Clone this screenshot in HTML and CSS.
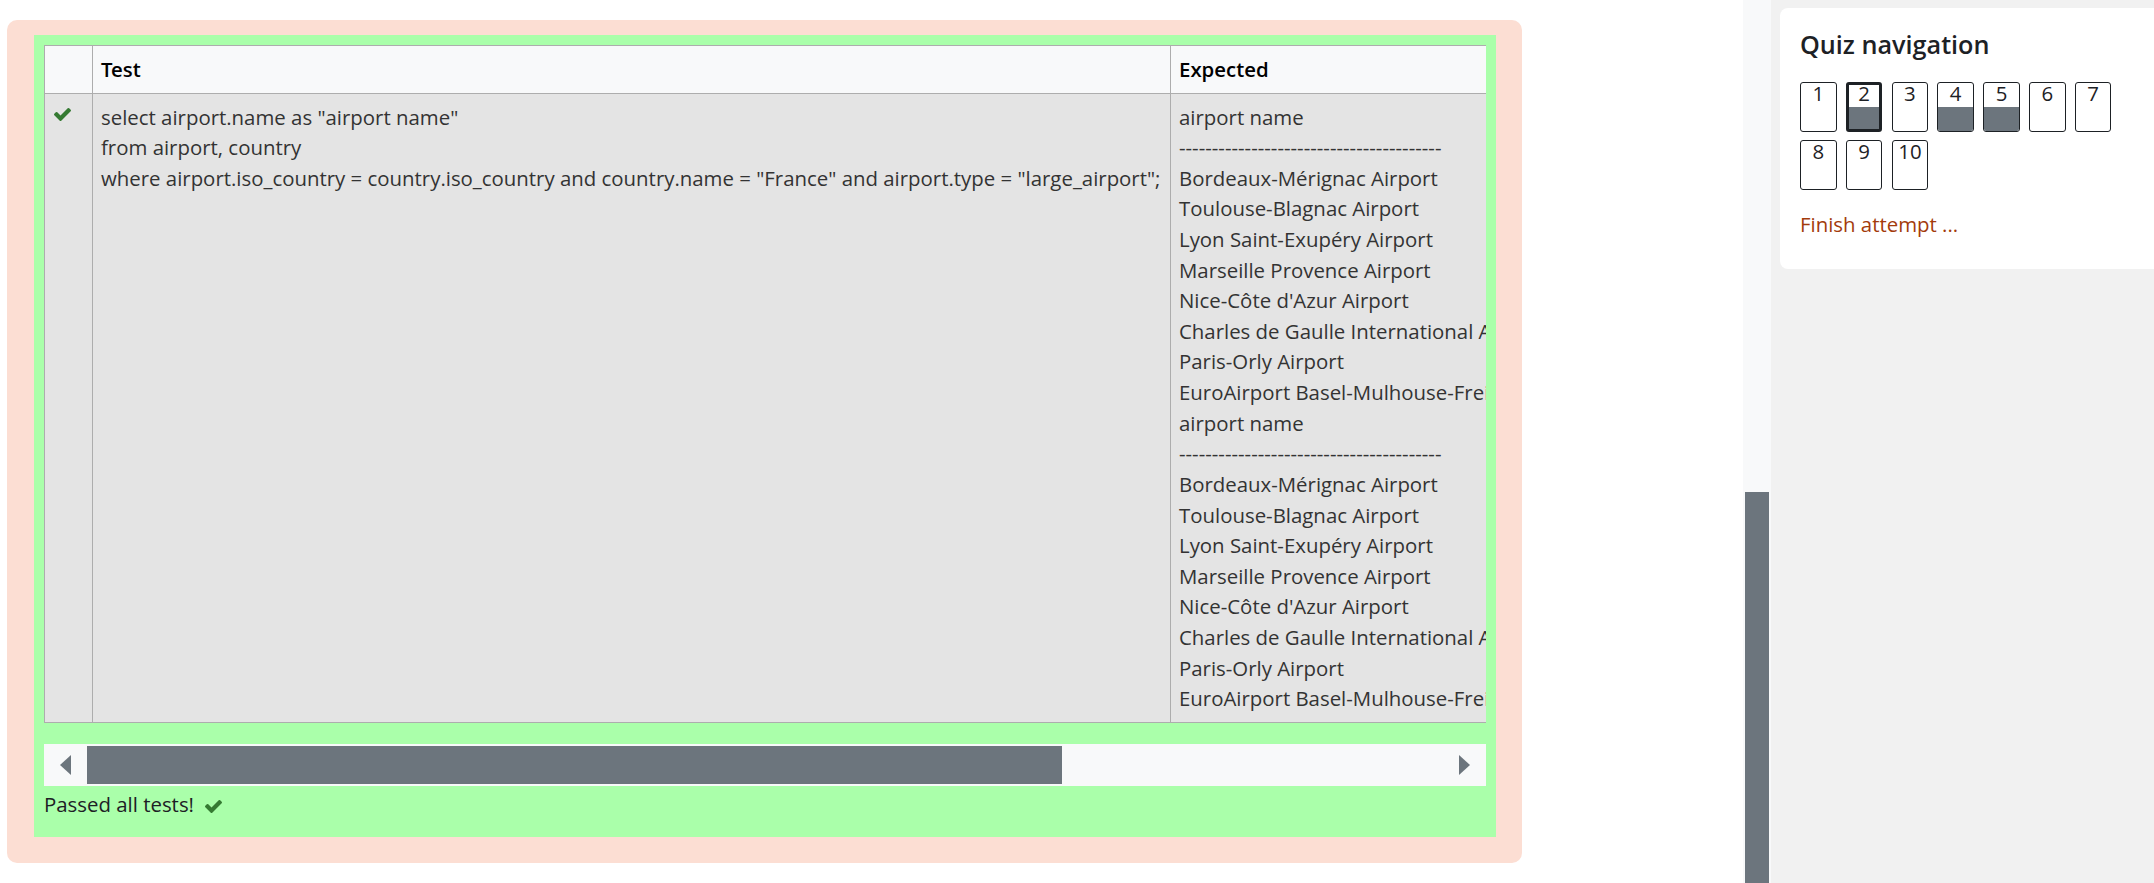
FILE: index.html
```html
<!DOCTYPE html>
<html lang="en">
<head>
<meta charset="utf-8">
<title>Quiz</title>
<link rel="stylesheet" href="styles.css">
</head>
<body>
<div class="page">
  <main class="main">
    <div class="outcome">
      <div class="feedback">
        <div class="table-wrap">
          <table class="results">
            <colgroup>
              <col class="c-icon"><col class="c-test"><col class="c-exp">
            </colgroup>
            <thead>
              <tr><th></th><th>Test</th><th>Expected</th></tr>
            </thead>
            <tbody>
              <tr>
                <td class="icon-cell"><svg class="check" viewBox="121 334 1550 1188" aria-hidden="true"><path d="M1671 566q0 40-28 68l-724 724-136 136q-28 28-68 28t-68-28l-136-136-362-362q-28-28-28-68t28-68l136-136q28-28 68-28t68 28l294 295 656-657q28-28 68-28t68 28l136 136q28 28 28 68z"/></svg></td>
                <td class="code">select airport.name as "airport name"
from airport, country
where airport.iso_country = country.iso_country and country.name = "France" and airport.type = "large_airport";</td>
                <td class="out">airport name
----------------------------------------
Bordeaux-Mérignac Airport
Toulouse-Blagnac Airport
Lyon Saint-Exupéry Airport
Marseille Provence Airport
Nice-Côte d'Azur Airport
Charles de Gaulle International Airport
Paris-Orly Airport
EuroAirport Basel-Mulhouse-Freiburg Airport
airport name
----------------------------------------
Bordeaux-Mérignac Airport
Toulouse-Blagnac Airport
Lyon Saint-Exupéry Airport
Marseille Provence Airport
Nice-Côte d'Azur Airport
Charles de Gaulle International Airport
Paris-Orly Airport
EuroAirport Basel-Mulhouse-Freiburg Airport</td>
              </tr>
            </tbody>
          </table>
        </div>
        <div class="hscroll">
          <div class="hbtn"><span class="tri tri-left"></span></div>
          <div class="htrack"><div class="hthumb"></div></div>
          <div class="hbtn"><span class="tri tri-right"></span></div>
        </div>
        <p class="passed">Passed all tests! <svg class="check check-inline" viewBox="121 334 1550 1188" aria-hidden="true"><path d="M1671 566q0 40-28 68l-724 724-136 136q-28 28-68 28t-68-28l-136-136-362-362q-28-28-28-68t28-68l136-136q28-28 68-28t68 28l294 295 656-657q28-28 68-28t68 28l136 136q28 28 28 68z"/></svg></p>
      </div>
    </div>
  </main>
  <div class="vscroll"><div class="vthumb"></div></div>
  <aside class="drawer">
    <section class="card">
      <h3 class="card-title">Quiz navigation</h3>
      <div class="qn-buttons">
        <a class="qn"><span class="num">1</span><span class="fill"></span></a>
        <a class="qn current answered"><span class="num">2</span><span class="fill"></span></a>
        <a class="qn"><span class="num">3</span><span class="fill"></span></a>
        <a class="qn answered"><span class="num">4</span><span class="fill"></span></a>
        <a class="qn answered"><span class="num">5</span><span class="fill"></span></a>
        <a class="qn"><span class="num">6</span><span class="fill"></span></a>
        <a class="qn"><span class="num">7</span><span class="fill"></span></a>
        <a class="qn"><span class="num">8</span><span class="fill"></span></a>
        <a class="qn"><span class="num">9</span><span class="fill"></span></a>
        <a class="qn"><span class="num">10</span><span class="fill"></span></a>
      </div>
      <a class="finish" href="#">Finish attempt ...</a>
    </section>
  </aside>
</div>
</body>
</html>
```

FILE: styles.css
```css
* { box-sizing: border-box; }
html, body { margin: 0; padding: 0; }
body {
  font-family: "Open Sans", "Noto Sans", sans-serif;
  font-size: 20.4px;
  line-height: 1.5;
  color: #1d2125;
  background: #fff;
}
.page {
  display: flex;
  width: 2154px;
  height: 883px;
  overflow: hidden;
}
.main {
  width: 1743px;
  flex: none;
  padding: 20px 0 0 7px;
  background: #fff;
}
.outcome {
  width: 1515px;
  background: #fcded3;
  border-radius: 10px;
  padding: 15px 26px 26px 27px;
}
.feedback {
  background: #aaffaa;
  padding: 10px 10px 10px 10px;
}
.table-wrap {
  overflow: hidden;
  margin-bottom: 21px;
}
.results {
  border-collapse: collapse;
  table-layout: fixed;
  width: 1726px;
  background: #e4e4e4;
  color: #333;
}
.c-icon { width: 48px; }
.c-test { width: 1078px; }
.c-exp { width: 600px; }
.results th, .results td {
  border: 1px solid #adadad;
  padding: 8px 8px;
  text-align: left;
  vertical-align: top;
  white-space: pre;
}
.results thead th {
  background: #f8f9fa;
  color: #000;
  font-family: "Open Sans SemiBold", "Open Sans", "Noto Sans", sans-serif;
  font-weight: 600;
}
.icon-cell { padding-left: 9px !important; }
.check {
  width: 17px;
  height: 13px;
  fill: #357a32;
}
.icon-cell .check {
  display: block;
  margin-top: 6px;
}
.hscroll {
  display: flex;
  height: 42px;
  background: #f8f9fa;
}
.hbtn {
  width: 43px;
  flex: none;
  display: flex;
  align-items: center;
  justify-content: center;
}
.tri {
  width: 0;
  height: 0;
  border-top: 10.5px solid transparent;
  border-bottom: 10.5px solid transparent;
}
.tri-left { border-right: 11px solid #6c757d; }
.tri-right { border-left: 11px solid #6c757d; }
.htrack {
  flex: 1;
  padding: 2px 0;
}
.hthumb {
  width: 975px;
  height: 100%;
  background: #6c757d;
}
.passed {
  margin: 3px 0 8px 0;
  color: #1d2125;
}
.check-inline {
  margin-left: 6px;
  vertical-align: -1px;
}
.vscroll {
  width: 28px;
  flex: none;
  background: #f8f9fa;
  padding: 492px 2px 0;
}
.vthumb {
  height: 100%;
  background: #6c757d;
}
.drawer {
  flex: 1;
  background: #f1f1f1;
  padding: 8px 0 0 9px;
  overflow: hidden;
}
.card {
  width: 420px;
  height: 261px;
  background: #fff;
  border-radius: 8px;
  padding: 21px 20px;
}
.card-title {
  margin: 0 0 23px;
  font-family: "Open Sans SemiBold", "Open Sans", "Noto Sans", sans-serif;
  font-size: 25.2px;
  line-height: 1.2;
  font-weight: 600;
  color: #1d2125;
}
.qn-buttons {
  display: flex;
  flex-wrap: wrap;
  width: 330px;
}
.qn {
  display: flex;
  flex-direction: column;
  width: 36.7px;
  height: 50px;
  margin: 0 9.1px 8px 0;
  border: 1px solid #1d2125;
  border-radius: 3px;
  overflow: hidden;
  background: #fff;
  color: #1d2125;
  text-align: center;
}
.qn .num {
  display: block;
  height: 23.7px;
  line-height: 20.4px;
  flex: none;
}
.qn .fill { flex: 1; }
.qn.answered .fill { background: #6c757d; }
.qn.current { border-width: 3px; }
.qn.current .num { margin-top: -2px; }
.finish {
  display: inline-block;
  margin-top: 11px;
  color: #a33b0b;
  text-decoration: none;
}
```
